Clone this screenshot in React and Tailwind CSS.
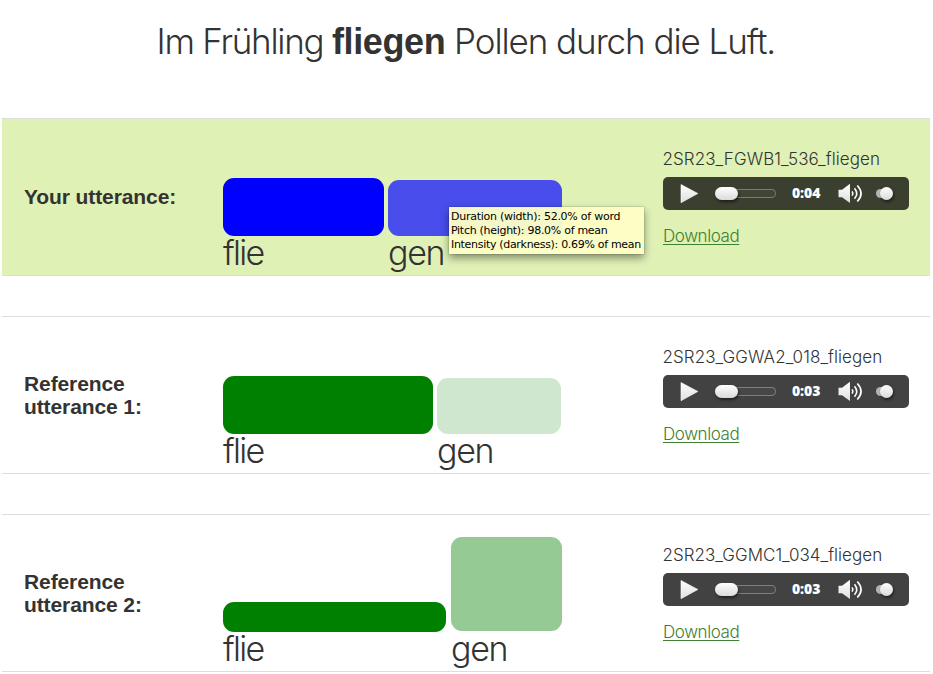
const rows = [
  {
    title: 'Your utterance:',
    titleClass: 'pb-[2px]',
    file: '2SR23_FGWB1_536_fliegen',
    fileClass: 'tracking-[0.08px]',
    time: '0:04',
    bg: 'bg-[#dff1b5]',
    bars: [
      { text: 'flie', bar: 'w-[161px] h-[58px] bg-[#0000ff]', label: 'tracking-[-1.7px]' },
      { text: 'gen', bar: 'w-[174px] h-[56px] bg-[#484deb]', label: 'tracking-[-1.3px]', tip: true },
    ],
    gap: 'gap-[4px]',
  },
  {
    title: 'Reference utterance 1:',
    titleClass: '',
    file: '2SR23_GGWA2_018_fliegen',
    fileClass: 'tracking-[0.08px]',
    time: '0:03',
    bg: 'bg-white',
    bars: [
      { text: 'flie', bar: 'w-[210px] h-[58px] bg-[#008000]', label: 'tracking-[-1.7px]' },
      { text: 'gen', bar: 'w-[124px] h-[56px] bg-[#cfe7cf]', label: 'tracking-[-1.3px]' },
    ],
    gap: 'gap-[4px]',
  },
  {
    title: 'Reference utterance 2:',
    titleClass: '',
    file: '2SR23_GGMC1_034_fliegen',
    fileClass: 'tracking-[0.03px]',
    time: '0:03',
    bg: 'bg-white',
    bars: [
      { text: 'flie', bar: 'w-[223px] h-[30px] bg-[#008000]', label: 'tracking-[-1.7px]' },
      { text: 'gen', bar: 'w-[111px] h-[94px] mb-px bg-[#95ca95]', label: 'tracking-[-1.3px]' },
    ],
    gap: 'gap-[5px]',
  },
];

function Player({ time }) {
  return (
    <div className="flex h-[33px] w-[246px] items-center rounded-[5px] bg-black/74">
      <svg className="ml-[17px] h-[20px] w-[18px]" viewBox="0 0 18 20">
        <defs>
          <linearGradient id="shine" x1="0" y1="0" x2="0" y2="1">
            <stop offset="0" stopColor="#ffffff" />
            <stop offset="1" stopColor="#dedede" />
          </linearGradient>
        </defs>
        <path d="M1 .5 L17.8 9.5 L1 18.7 Z" fill="url(#shine)" stroke="#fff" strokeWidth=".6" />
      </svg>
      <div className="ml-[17px] flex h-[14px] w-[61px] items-center">
        <div className="flex h-[9px] w-full items-center rounded-full border border-white/30 bg-white/3">
          <div className="-ml-px h-[13px] w-[23px] shrink-0 rounded-full bg-linear-to-b from-white to-[#dadada] shadow-[1px_2px_3px_rgba(0,0,0,0.5)]" />
        </div>
      </div>
      <span className="mb-[2px] ml-[16px] w-[30px] font-['Open_Sans',sans-serif] text-[14px] leading-[14px] font-extrabold tracking-[-0.1px] whitespace-nowrap text-white">
        {time}
      </span>
      <svg className="ml-[16px] h-[21px] w-[25px]" viewBox="0 0 25 21">
        <path d="M.5 6.8 H4 L12 .7 V20 L4 14.2 H.5 Z" fill="url(#shine)" />
        <path d="M14 8.4 Q15.7 10.5 14 12.6" fill="none" stroke="#fff" strokeWidth="1.5" />
        <path d="M16.5 5.2 Q20.9 10.5 16.5 15.8" fill="none" stroke="#fff" strokeWidth="1.6" />
        <path d="M19.3 2.5 Q26.8 10.5 19.3 18.5" fill="none" stroke="#fff" strokeWidth="1.7" />
      </svg>
      <div className="ml-[13px] flex h-[13px] w-[17px] items-center">
        <div className="h-[9px] w-[9px] shrink-0 rounded-l-full bg-[#b5b5b5]" />
        <div className="-ml-[5px] h-[13px] w-[13px] shrink-0 rounded-full bg-linear-to-b from-white to-[#dadada] shadow-[1px_2px_3px_rgba(0,0,0,0.5)]" />
      </div>
    </div>
  );
}

function Tooltip() {
  return (
    <div className="absolute top-[27px] left-[61px] z-10 w-[195px] bg-[#fdfec6]/96 pt-[3px] pb-[2px] pl-[2px] font-['DejaVu_Sans',sans-serif] text-[11px] leading-[14px] whitespace-nowrap text-black shadow-[0_4px_8px_rgba(0,0,0,0.42),0_0_1px_rgba(0,0,0,0.5)]">
      <p className="tracking-[-0.25px]">Duration (width): 52.0% of word</p>
      <p className="tracking-[-0.29px]">Pitch (height): 98.0% of mean</p>
      <p className="tracking-[-0.31px]">Intensity (darkness): 0.69% of mean</p>
    </div>
  );
}

function Row({ row }) {
  return (
    <section className={`flex h-[158px] border-y border-[#dddddd] ${row.bg}`}>
      <div className={`flex w-[221px] items-center pl-[22px] ${row.titleClass}`}>
        <h2 className="w-[160px] font-['Liberation_Sans',sans-serif] text-[21px] leading-[23px] font-bold tracking-[-0.1px]">
          {row.title}
        </h2>
      </div>
      <div className={`flex w-[440px] items-end ${row.gap}`}>
        {row.bars.map((b) => (
          <div key={b.text} className="relative flex flex-col">
            <div className={`rounded-[11px] ${b.bar}`} />
            <span className={`h-[39px] text-[34px] leading-[34px] font-light ${b.label}`}>{b.text}</span>
            {b.tip && <Tooltip />}
          </div>
        ))}
      </div>
      <div className="flex flex-col items-start pt-[30px] text-[17px] leading-[20px] font-light">
        <span className={`-ml-[0.5px] whitespace-nowrap ${row.fileClass}`}>{row.file}</span>
        <div className="mt-[8px]">
          <Player time={row.time} />
        </div>
        <a className="mt-[16px] tracking-[-0.42px] text-[#3f7f2f] underline decoration-1 underline-offset-2">Download</a>
      </div>
    </section>
  );
}

export default function App() {
  return (
    <main className="h-[674px] w-[933px] overflow-hidden bg-white font-['Inter','Liberation_Sans',sans-serif] text-[#333333]">
      <h1 className="h-[118px] pt-[19px] pl-[156.5px] text-[35px] leading-[44px] font-light whitespace-pre">
        <span className="tracking-[-1.26px]">Im Frühling </span>
        <b className="font-['Liberation_Sans',sans-serif] text-[36px] font-bold tracking-[-0.4px]">fliegen</b>
        <span className="tracking-[-1.07px]"> Pollen durch die Luft.</span>
      </h1>
      <div className="ml-[2px] flex w-[928px] flex-col gap-[40px]">
        {rows.map((row) => (
          <Row key={row.file} row={row} />
        ))}
      </div>
    </main>
  );
}
